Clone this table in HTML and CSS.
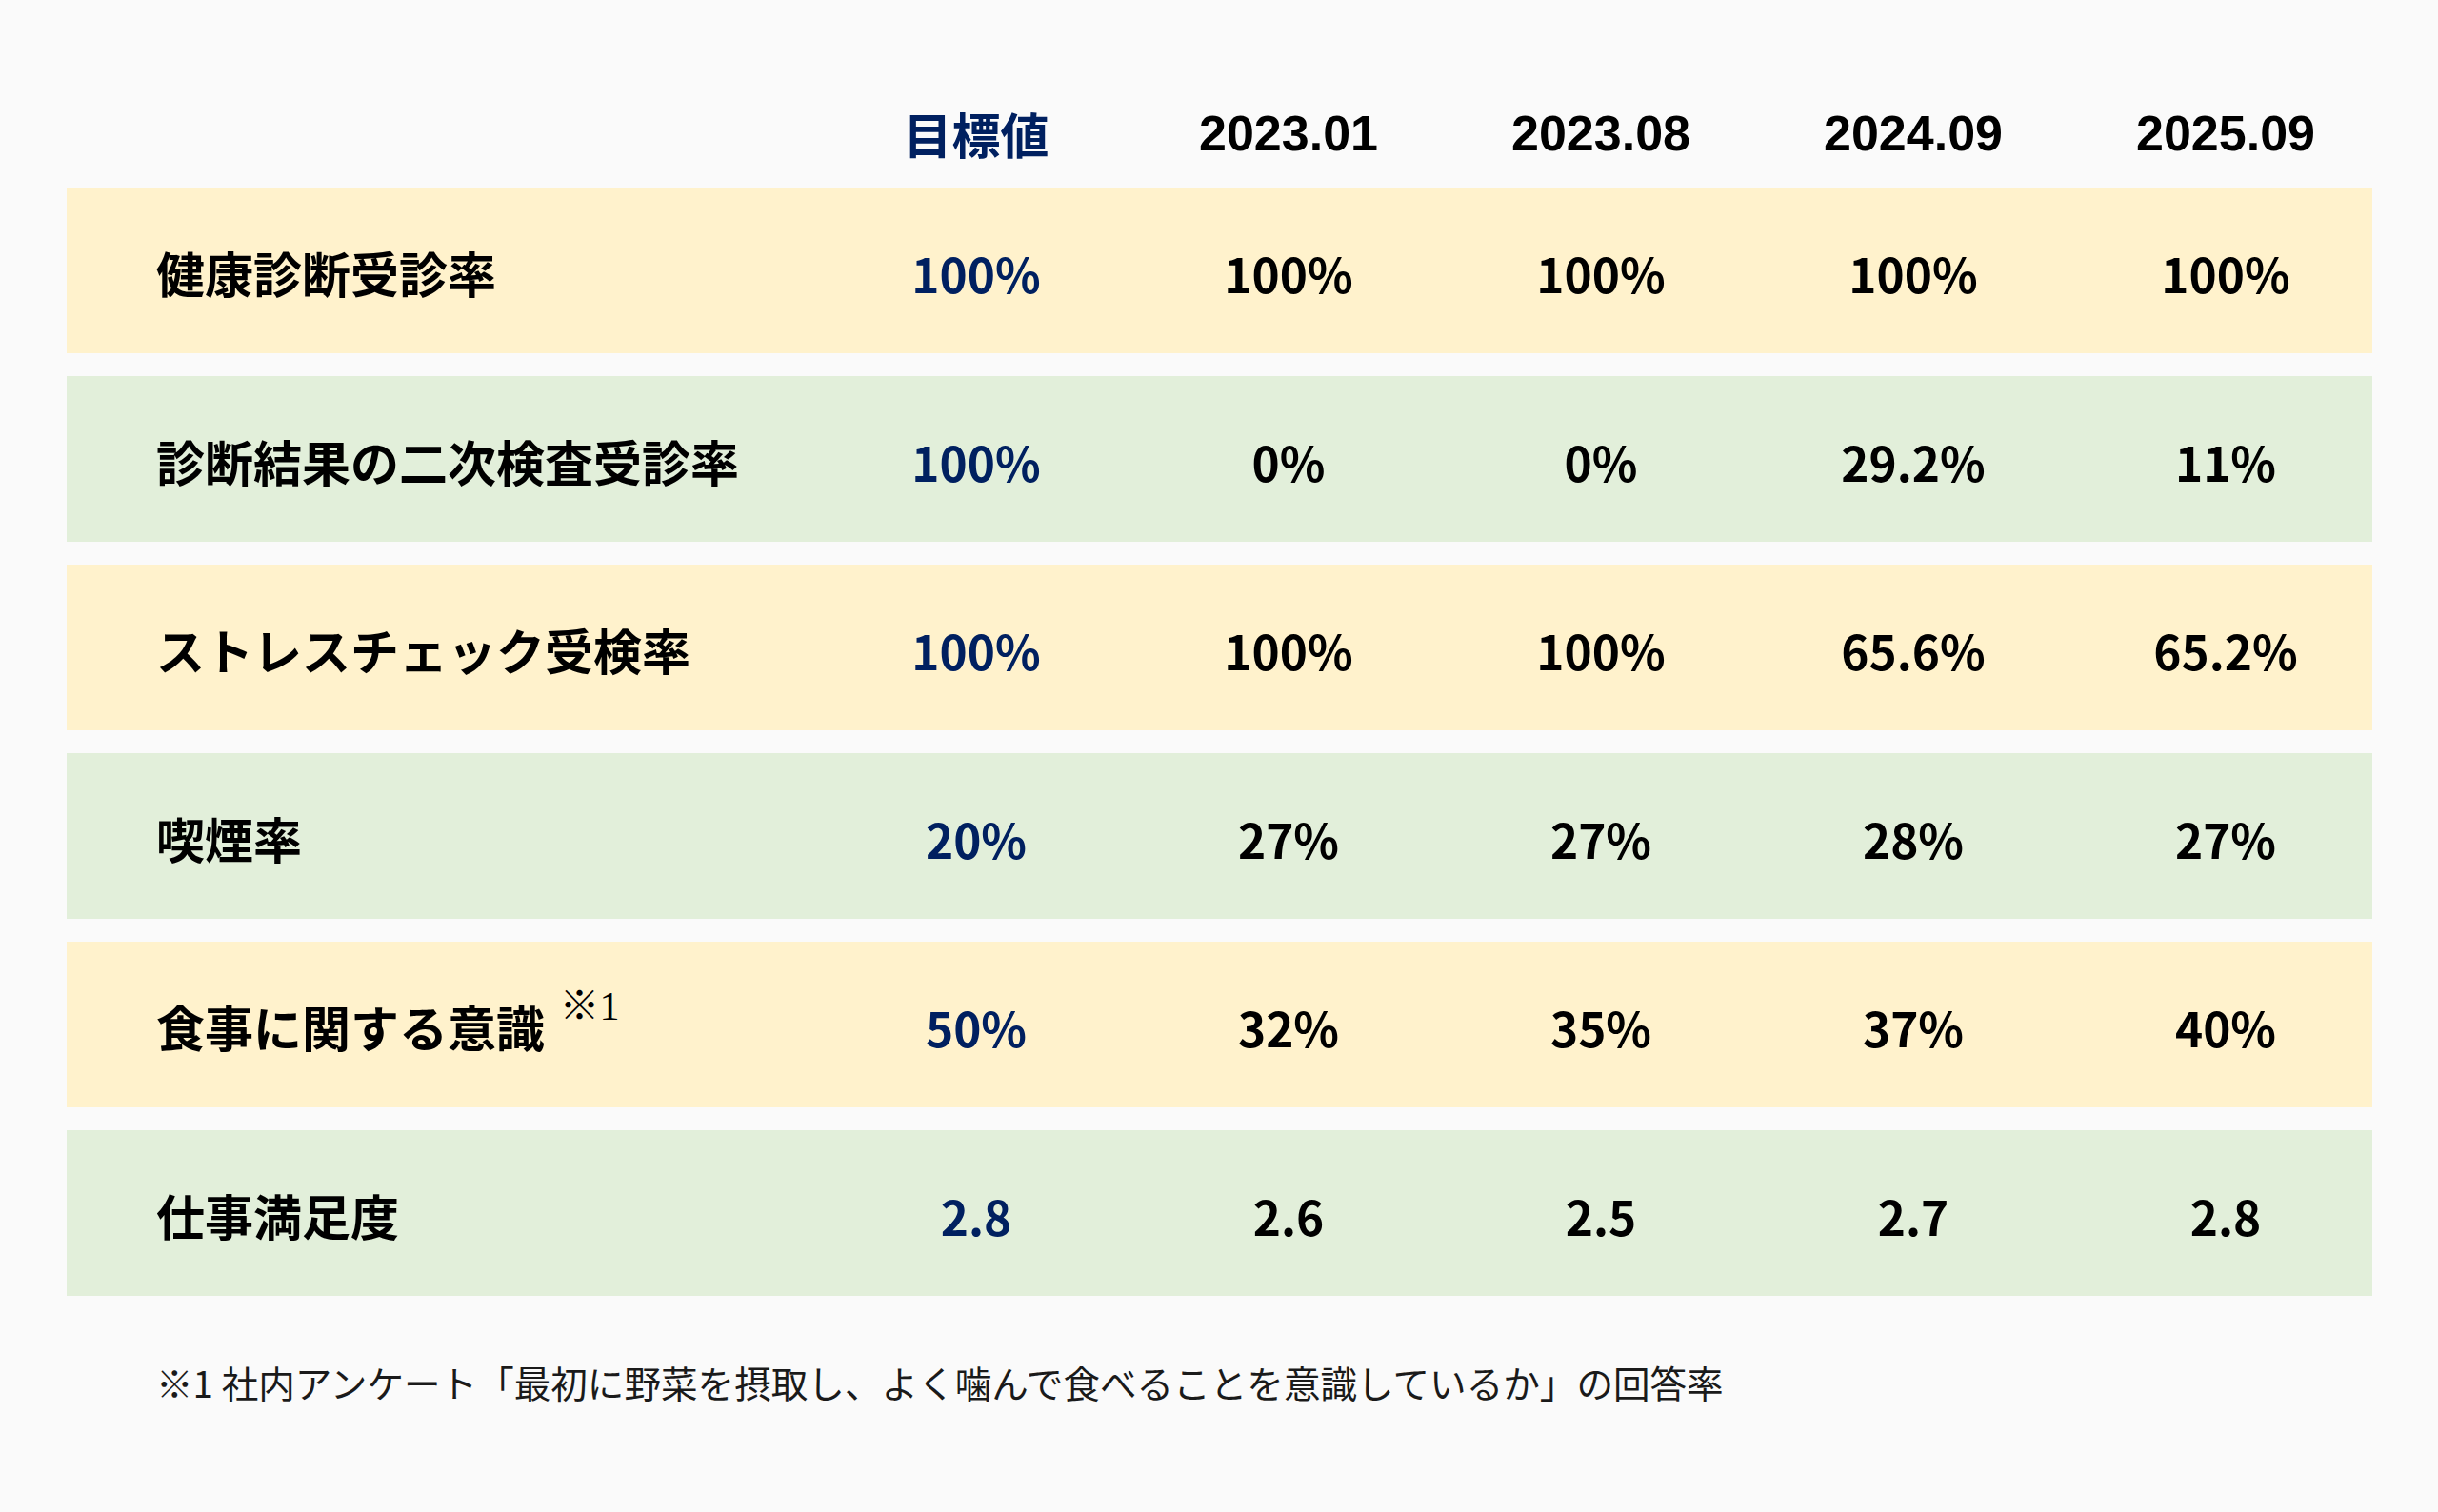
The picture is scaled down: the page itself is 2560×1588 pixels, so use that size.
FILE: index.html
```html
<!DOCTYPE html>
<html lang="ja">
<head>
<meta charset="utf-8">
<title>健康指標</title>
<link rel="stylesheet" href="styles.css">
</head>
<body>
<main class="page">
  <div class="table">
    <div class="head">
      <div class="cell label"></div>
      <div class="cell target">目標値</div>
      <div class="cell date">2023.01</div>
      <div class="cell date">2023.08</div>
      <div class="cell date">2024.09</div>
      <div class="cell date">2025.09</div>
    </div>
    <div class="row yellow">
      <div class="cell label">健康診断受診率</div>
      <div class="cell val target">100%</div>
      <div class="cell val">100%</div>
      <div class="cell val">100%</div>
      <div class="cell val">100%</div>
      <div class="cell val">100%</div>
    </div>
    <div class="row green">
      <div class="cell label">診断結果の二次検査受診率</div>
      <div class="cell val target">100%</div>
      <div class="cell val">0%</div>
      <div class="cell val">0%</div>
      <div class="cell val">29.2%</div>
      <div class="cell val">11%</div>
    </div>
    <div class="row yellow">
      <div class="cell label">ストレスチェック受検率</div>
      <div class="cell val target">100%</div>
      <div class="cell val">100%</div>
      <div class="cell val">100%</div>
      <div class="cell val">65.6%</div>
      <div class="cell val">65.2%</div>
    </div>
    <div class="row green">
      <div class="cell label">喫煙率</div>
      <div class="cell val target">20%</div>
      <div class="cell val">27%</div>
      <div class="cell val">27%</div>
      <div class="cell val">28%</div>
      <div class="cell val">27%</div>
    </div>
    <div class="row yellow">
      <div class="cell label">食事に関する意識 <sup class="note">※1</sup></div>
      <div class="cell val target">50%</div>
      <div class="cell val">32%</div>
      <div class="cell val">35%</div>
      <div class="cell val">37%</div>
      <div class="cell val">40%</div>
    </div>
    <div class="row green">
      <div class="cell label">仕事満足度</div>
      <div class="cell val target">2.8</div>
      <div class="cell val">2.6</div>
      <div class="cell val">2.5</div>
      <div class="cell val">2.7</div>
      <div class="cell val">2.8</div>
    </div>
  </div>
  <p class="footnote">※1 社内アンケート「最初に野菜を摂取し、よく噛んで食べることを意識しているか」の回答率</p>
</main>
</body>
</html>
```

FILE: styles.css
```css
* {
  box-sizing: border-box;
}

html, body {
  margin: 0;
  padding: 0;
  background: #fafafa;
}

body {
  font-family: "Noto Sans CJK JP", "Noto Sans", sans-serif;
  color: #000;
}

.page {
  width: 2560px;
  height: 1588px;
  padding: 100px 69px 0 70px;
}

.table {
  display: flex;
  flex-direction: column;
  gap: 24px;
  width: 2421px;
}

.head,
.row {
  display: grid;
  grid-template-columns: 791px repeat(5, 328px);
  align-items: center;
}

.head {
  height: 80px;
  margin-bottom: -7px;
}

.row {
  height: 174px;
  padding-top: 4px;
}

.yellow {
  background: #fff2cc;
}

.green {
  background: #e2efda;
}

.cell {
  text-align: center;
  font-size: 51px;
  font-weight: 700;
  white-space: nowrap;
}

.cell.val {
  font-size: 49.5px;
}

.cell.label {
  text-align: left;
  padding-left: 94px;
}

.head .date {
  font-family: "Liberation Sans", Arial, sans-serif;
  font-size: 52px;
  font-weight: 700;
}

.head .target {
  font-size: 51px;
}

.target {
  color: #002060;
}

.note {
  font-family: "Liberation Serif", "Noto Sans CJK JP", serif;
  font-size: 42px;
  font-weight: 400;
  vertical-align: 0.7em;
  line-height: 0;
  margin-left: 4px;
}

.footnote {
  margin: 62px 0 0 94px;
  font-size: 38.6px;
  font-weight: 400;
  color: #1a1a1a;
}
```
